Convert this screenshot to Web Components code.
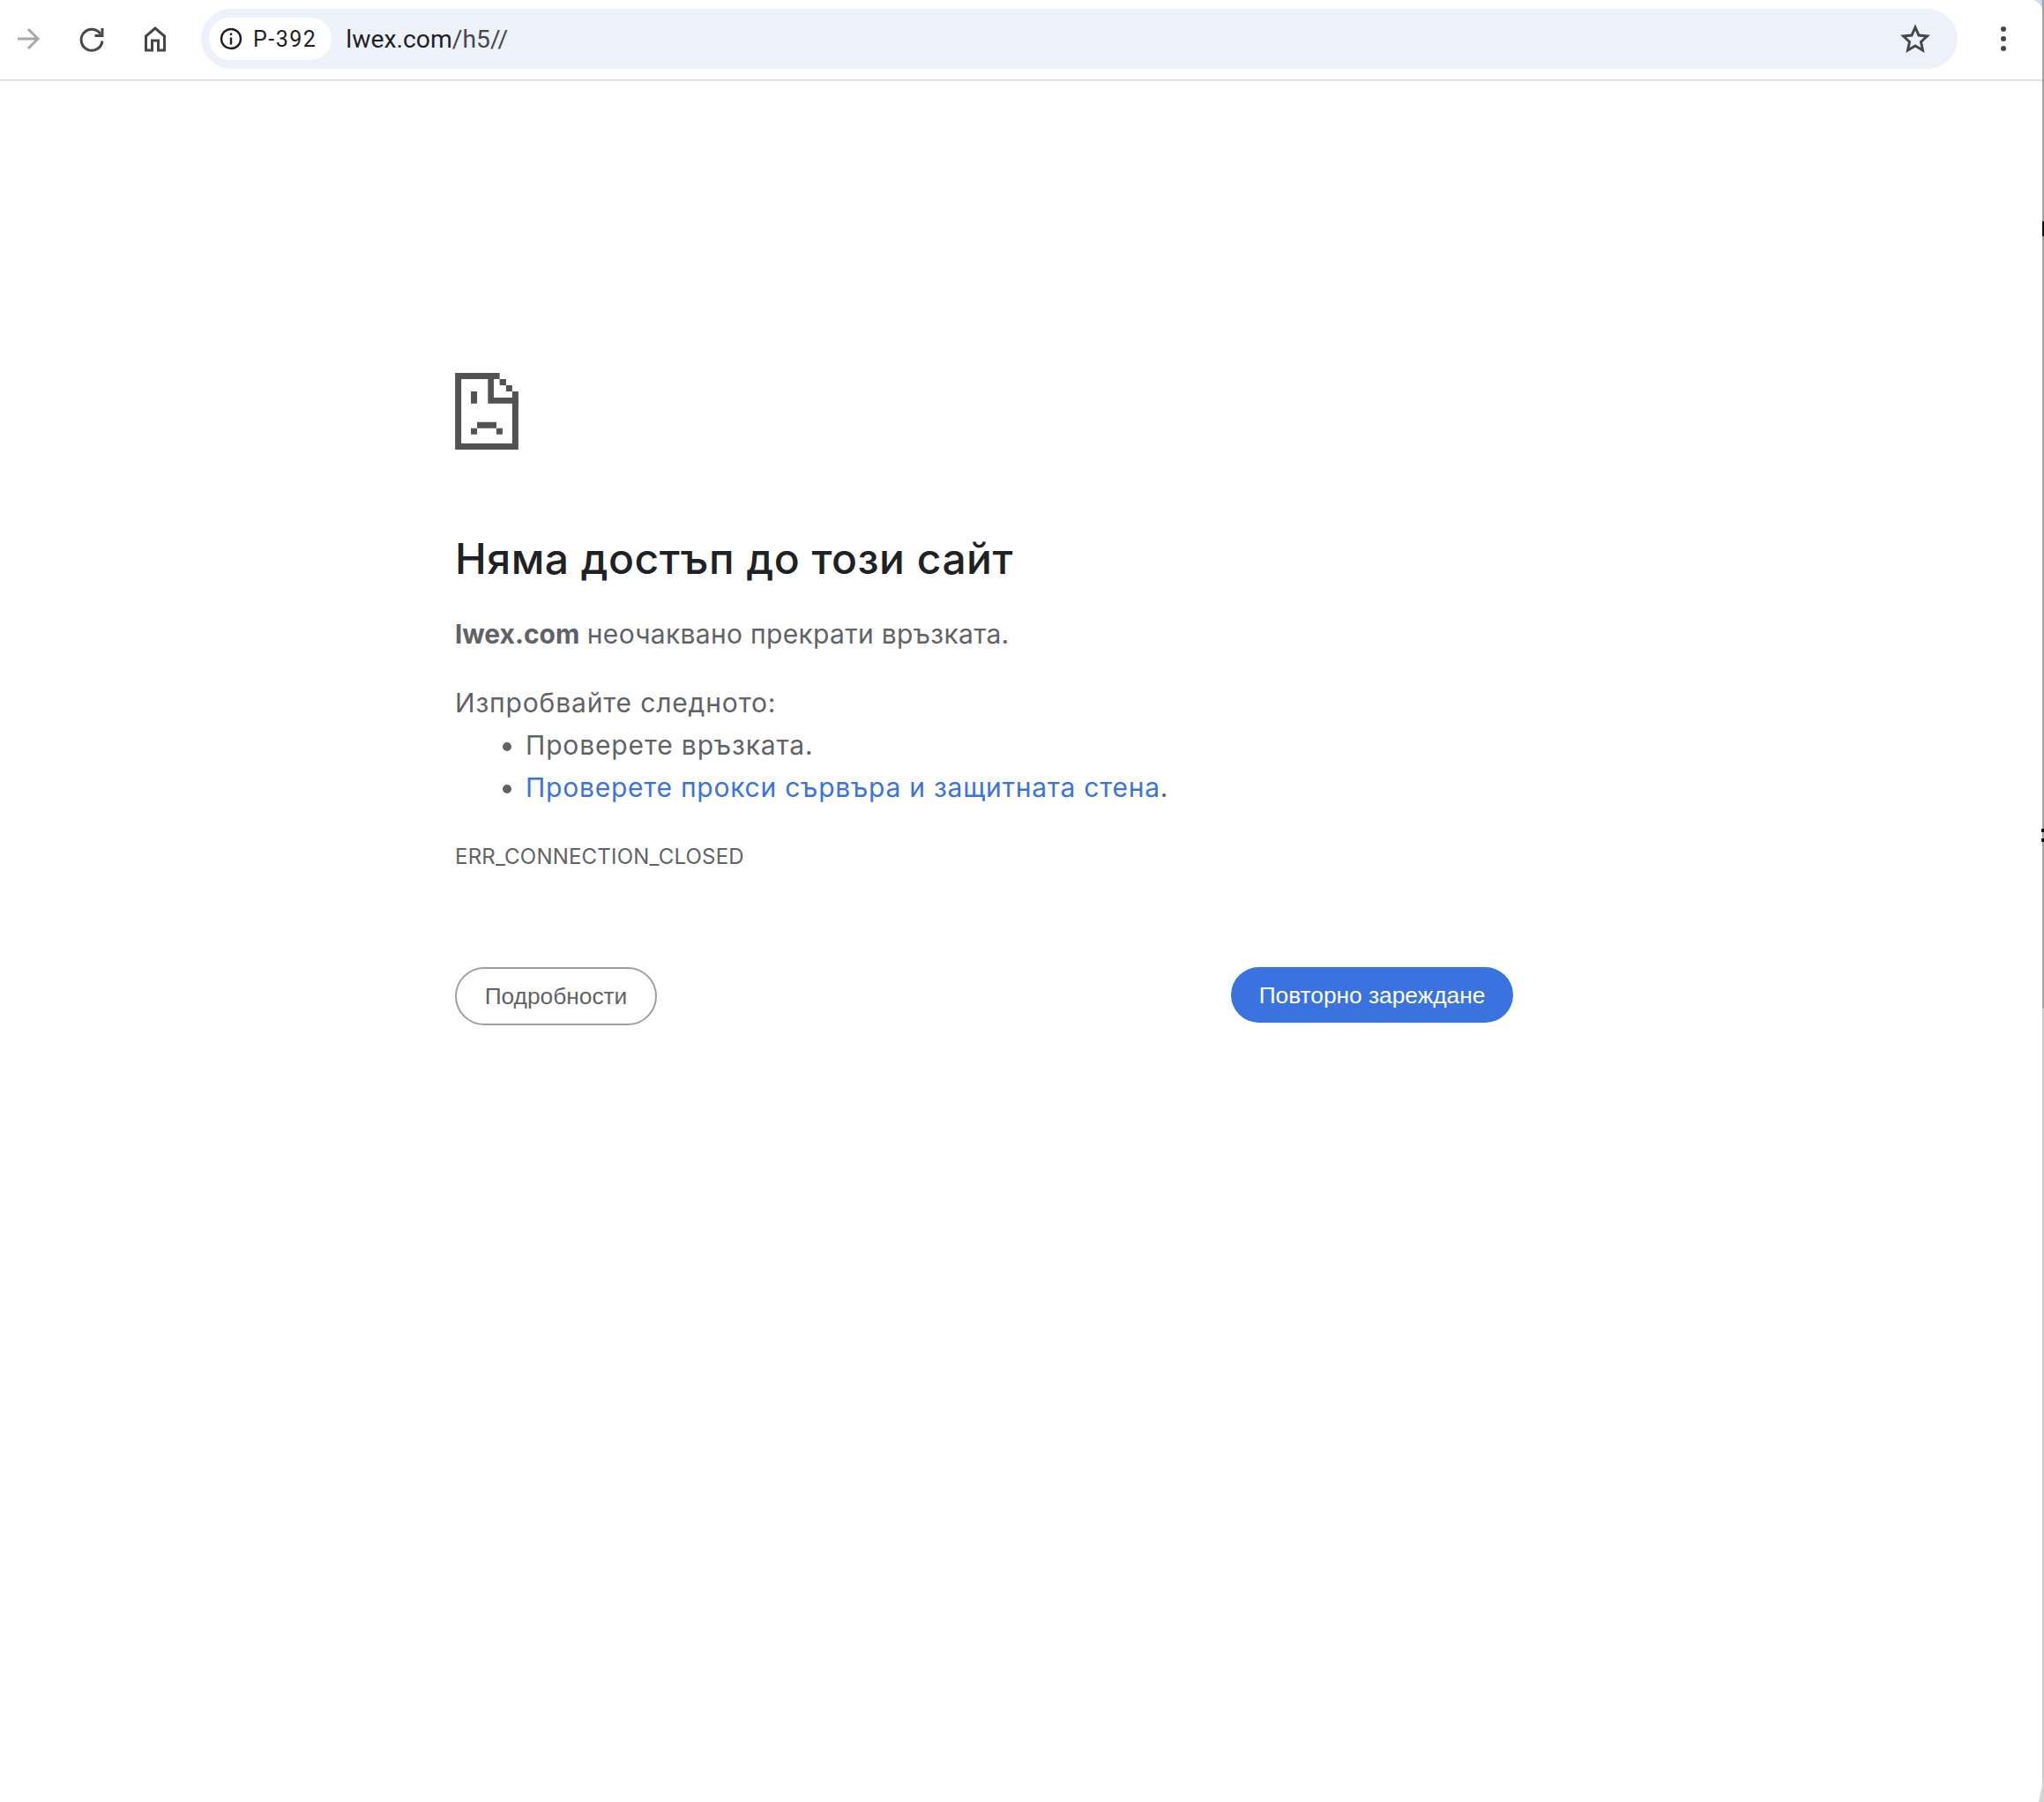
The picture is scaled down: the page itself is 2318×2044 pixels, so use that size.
<!DOCTYPE html>
<html lang="bg">
<head>
<meta charset="utf-8">
<title>lwex.com</title>
<style>
html, body { margin: 0; height: 100%; background: #fff; }
body { font-family: Inter, Roboto, "Liberation Sans", sans-serif; display: flex; flex-direction: column; position: relative; overflow: hidden; }
a { color: #3a73e0; text-decoration: none; }
.wide { letter-spacing: .31px; }
</style>
</head>
<body>
<browser-toolbar url="lwex.com" path="/h5//" chip="P-392"></browser-toolbar>
<error-page>
  <span slot="title">Няма достъп до този сайт</span>
  <span slot="summary"><b>lwex.com</b> <span class="wide">неочаквано прекрати връзката.</span></span>
  <span slot="lead">Изпробвайте следното:</span>
  <li slot="tips" style="letter-spacing:.85px">Проверете връзката.</li>
  <li slot="tips" style="letter-spacing:.76px"><a href="#">Проверете прокси сървъра и защитната стена</a>.</li>
  <span slot="code">ERR_CONNECTION_CLOSED</span>
  <action-button slot="details" kind="outline">Подробности</action-button>
  <action-button slot="reload" kind="primary">Повторно зареждане</action-button>
</error-page>
<window-edge></window-edge>
<script>
'use strict';

class BrowserToolbar extends HTMLElement {
  constructor() {
    super();
    const shadowRoot = this.attachShadow({mode: 'open'});
    shadowRoot.innerHTML = `
<style>
:host {
  display: flex;
  align-items: center;
  box-sizing: border-box;
  height: 92px;
  padding: 0 0 2px 0;
  border-bottom: 2px solid #e3e3e3;
  font-family: Roboto, sans-serif;
  color: #1f1f1f;
}
.nav { display: flex; align-items: center; gap: 32px; padding-left: 12px; width: 212px; box-sizing: border-box; }
.nav svg { display: block; width: 40px; height: 40px; }
.pill {
  flex: 0 0 1992px;
  height: 68px;
  margin-left: 16px;
  box-sizing: border-box;
  border-radius: 34px;
  background: #edf2fa;
  display: flex;
  align-items: center;
  padding: 0 30px 0 9px;
}
.chip {
  display: flex;
  align-items: center;
  gap: 12px;
  height: 48px;
  padding: 0 17px 0 12px;
  border-radius: 24px;
  background: #fff;
  font-size: 25px;
  letter-spacing: 1.500px;
}
.url { margin-left: 16px; font-size: 28.300px; flex: 1; }
.url span { color: #474747; }
.menu { margin-left: 48px; }
</style>
<div class="nav">
  <svg viewBox="0 0 40 40" fill="none" stroke="#a8a8a8" stroke-width="3"><path d="M8 20h22M20 9l11 11-11 11"/></svg>
  <svg viewBox="0 0 40 40" fill="none" stroke="#474747" stroke-width="3"><path d="M30 14.500a12 12 0 1 0 2 8"/><path d="M32 8v8.500h-8.500"/></svg>
  <svg viewBox="0 0 40 40" fill="none" stroke="#474747" stroke-width="3"><path d="M9.500 33V17L20 8l10.500 9v16h-7V22h-7v11z"/></svg>
</div>
<div class="pill">
  <div class="chip">
    <svg width="26" height="26" viewBox="0 0 26 26" fill="none" stroke="#1f1f1f" stroke-width="2.400"><circle cx="13" cy="13" r="11"/><path d="M13 11.500v8"/><path d="M13 6.500v2.500"/></svg>
    <span id="chip"></span>
  </div>
  <div class="url"><b id="host" style="font-weight:400"></b><span id="path"></span></div>
  <svg width="36" height="36" viewBox="0 0 36 36" fill="none" stroke="#474747" stroke-width="3" stroke-linejoin="miter"><path d="M18 5l4 9 9.500 1-7 6.500 2 9.500-8.500-5-8.500 5 2-9.500-7-6.500 9.500-1z"/></svg>
</div>
<svg class="menu" width="8" height="30" viewBox="0 0 8 30" fill="#474747"><circle cx="4" cy="4" r="3"/><circle cx="4" cy="15" r="3"/><circle cx="4" cy="26" r="3"/></svg>
`;
  }

  connectedCallback() {
    const root = this.shadowRoot;
    root.querySelector('#chip').textContent = this.getAttribute('chip');
    root.querySelector('#host').textContent = this.getAttribute('url');
    root.querySelector('#path').textContent = this.getAttribute('path');
  }
}

class ErrorPage extends HTMLElement {
  constructor() {
    super();
    const shadowRoot = this.attachShadow({mode: 'open'});
    shadowRoot.innerHTML = `
<style>
:host {
  display: block;
  flex: 1;
  box-sizing: border-box;
  padding: 331px 0 0 516px;
  font-family: Inter, Roboto, sans-serif;
  color: #5f6368;
  font-size: 30px;
  line-height: 48px;
}
.wrap { width: 1200px; }
svg { display: block; width: 72px; height: 87px; }
h1 { margin: 94px 0 0; font-size: 48px; line-height: 60px; font-weight: 500; color: #202124; letter-spacing: .48px; }
p { margin: 0; }
.summary { margin-top: 31px; }
.lead { margin-top: 30px; letter-spacing: .84px; }
ul { margin: 0; padding: 0 0 0 80px; }
::slotted(li) { line-height: 48px; }
.code { margin-top: 31px; font-size: 24px; letter-spacing: .2px; }
.actions { margin-top: 101px; display: flex; justify-content: space-between; align-items: flex-start; }
</style>
<div class="wrap">
  <svg viewBox="0 0 216 262" fill="#525252"><path d="M0 0h152v21H21v220h174V63h21v199H0z"/><path d="M112 21h20v63h84v21H112z"/><path d="M152 21h22v21h-22zM174 42h21v21h-21z"/><path d="M54 63h21v42H54zM75 168h66v21H75zM54 189h21v21H54zM141 189h21v21h-21z"/></svg>
  <h1><slot name="title"></slot></h1>
  <p class="summary"><slot name="summary"></slot></p>
  <p class="lead"><slot name="lead"></slot></p>
  <ul><slot name="tips"></slot></ul>
  <p class="code"><slot name="code"></slot></p>
  <div class="actions"><slot name="details"></slot><slot name="reload"></slot></div>
</div>
`;
  }
}

class ActionButton extends HTMLElement {
  constructor() {
    super();
    const shadowRoot = this.attachShadow({mode: 'open'});
    shadowRoot.innerHTML = `
<style>
:host {
  display: inline-flex;
  align-items: center;
  justify-content: center;
  box-sizing: border-box;
  border-radius: 34px;
  font-family: "Liberation Sans", Arial, sans-serif;
  font-size: 26.300px;
  line-height: 30px;
}
:host([kind="outline"]) { width: 229px; height: 66px; border: 2px solid #9aa0a6; color: #5f6368; }
:host([kind="primary"]) { width: 320px; height: 63px; background: #3a73e0; color: #fff; }
</style>
<slot></slot>
`;
  }
}

// the edge of the window that shows in the screenshot, lying over the page
class WindowEdge extends HTMLElement {
  constructor() {
    super();
    const shadowRoot = this.attachShadow({mode: 'open'});
    shadowRoot.innerHTML = `
<style>
:host { position: absolute; top: 0; right: 0; bottom: 0; width: 12px; pointer-events: none; }
div, svg { position: absolute; display: block; }
.line { right: 0; width: 2px; top: 0; height: 1144px; background: #a2a2a2; }
.line.low { top: 1144px; bottom: 0; height: auto; background: #c6c6c6; }
.mark { right: 0; width: 2px; background: #111; }
.corner { top: 0; right: 2px; }
.taper { bottom: 0; right: 0; }
</style>
<svg class="corner" width="10" height="13" viewBox="0 0 10 13"><path d="M0 0H10V13A13 13 0 0 0 0 0z" fill="#c8d8f8"/></svg>
<div class="line"></div>
<div class="line low"></div>
<div class="mark" style="top:251px;height:17px"></div>
<div class="mark" style="top:940px;height:4px;width:3px"></div>
<div class="mark" style="top:951px;height:4px;width:3px"></div>
<svg class="taper" width="6" height="30" viewBox="0 0 6 30"><path d="M6 0V30H0z" fill="#d4d4d4"/></svg>
`;
  }
}

customElements.define('browser-toolbar', BrowserToolbar);
customElements.define('error-page', ErrorPage);
customElements.define('action-button', ActionButton);
customElements.define('window-edge', WindowEdge);
</script>
</body>
</html>
